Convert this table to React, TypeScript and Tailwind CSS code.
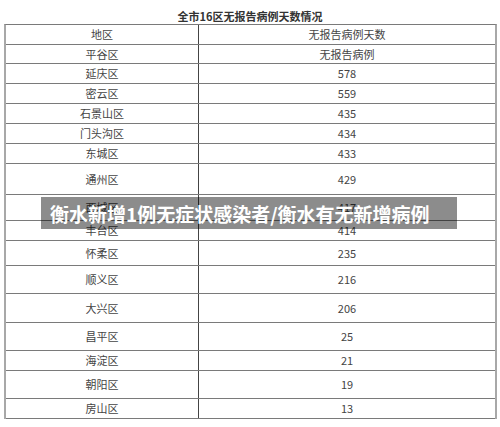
const rows: { name: string; value: string; h: string }[] = [
  { name: '平谷区', value: '无报告病例', h: 'h-[19px]' },
  { name: '延庆区', value: '578', h: 'h-[20px]' },
  { name: '密云区', value: '559', h: 'h-[20px]' },
  { name: '石景山区', value: '435', h: 'h-[20px]' },
  { name: '门头沟区', value: '434', h: 'h-[20px]' },
  { name: '东城区', value: '433', h: 'h-[20px]' },
  { name: '通州区', value: '429', h: 'h-[31px]' },
  { name: '西城区', value: '417', h: 'h-[26px]' },
  { name: '丰台区', value: '414', h: 'h-[20px]' },
  { name: '怀柔区', value: '235', h: 'h-[25px]' },
  { name: '顺义区', value: '216', h: 'h-[28px]' },
  { name: '大兴区', value: '206', h: 'h-[29px]' },
  { name: '昌平区', value: '25', h: 'h-[28px]' },
  { name: '海淀区', value: '21', h: 'h-[20px]' },
  { name: '朝阳区', value: '19', h: 'h-[28px]' },
  { name: '房山区', value: '13', h: 'h-[20px]' },
];

function Row({ name, value, h }: { name: string; value: string; h: string }) {
  return (
    <div className={`grid grid-cols-[193px_1fr] ${h} border-b border-[#7a7a7a]`}>
      <div className="flex items-center justify-center border-r border-[#444]">{name}</div>
      <div className="flex items-center justify-center">{value}</div>
    </div>
  );
}

export default function App() {
  return (
    <div
      className="relative w-[500px] h-[427px] overflow-hidden bg-white text-[#444]"
      style={{ fontFamily: '"Noto Sans CJK SC", "Noto Sans", sans-serif' }}
    >
      {/* Title */}
      <div className="h-[24px] pt-[6px] text-center text-[11px] font-bold leading-[20px] text-[#333]">
        全市16区无报告病例天数情况
      </div>

      {/* Table */}
      <div className="ml-[4px] w-[493px] border-t border-[#7a7a7a] border-x-2 border-x-[#a8a8a8] text-[11px] leading-none">
        <Row name="地区" value="无报告病例天数" h="h-[20px]" />
        {rows.map((r) => (
          <Row key={r.name} {...r} />
        ))}
      </div>

      {/* Overlay banner */}
      <div className="absolute left-[41px] top-[197px] flex h-[32px] w-[416px] items-center bg-black/45 pl-[9px] text-[19px] font-bold leading-none text-white">
        衡水新增1例无症状感染者/衡水有无新增病例
      </div>
    </div>
  );
}
